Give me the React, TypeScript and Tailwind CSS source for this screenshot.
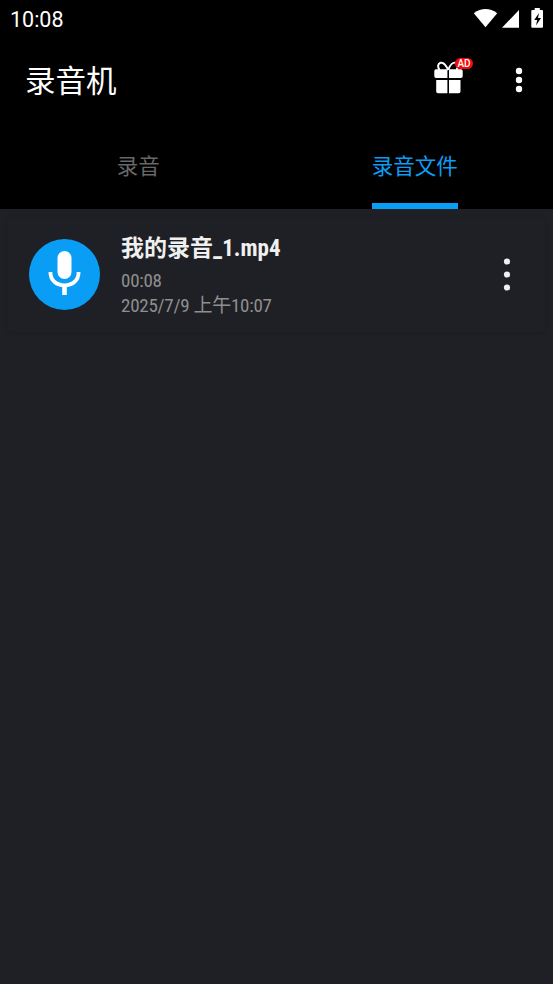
import React from 'react';

const tabs = [
  { label: '录音', active: false },
  { label: '录音文件', active: true },
];

const recordings = [
  { name: '我的录音_1.mp4', duration: '00:08', date: '2025/7/9 上午10:07' },
];

const StatusBar = () => (
  <div className="flex h-9 items-start justify-between pl-[10px] pr-[9px] text-white">
    <span className="pt-2 font-['Roboto',sans-serif] text-[21.5px] font-[450] leading-6">10:08</span>
    <svg className="mt-2" width="71" height="20" viewBox="0 0 71 20" fill="currentColor">
      <path d="M0.8 5.2 Q12.5 -3.2 24.2 5.2 L12.5 19.2Z" />
      <path d="M29 19.7 L46 2 V19.7Z" />
      <path
        fillRule="evenodd"
        d="M61.7 0H66.8V2H69Q70 2 70 3V18.7Q70 19.7 69 19.7H59.3Q58.3 19.7 58.3 18.7V3Q58.3 2 59.3 2H61.7ZM66 5L61.2 12H64.2L63 17.5L68 10H65Z"
      />
    </svg>
  </div>
);

const MoreDots = ({ className }: { className: string }) => (
  <svg className={className} width="8" height="34" viewBox="0 0 8 34" fill="currentColor">
    <circle cx="4" cy="3.5" r="3.1" />
    <circle cx="4" cy="16.5" r="3.1" />
    <circle cx="4" cy="29.5" r="3.1" />
  </svg>
);

const GiftIcon = () => (
  <svg width="29" height="33" viewBox="0 0 29 33" fill="none">
    <path
      d="M14.2 9C12 4 9 1 6.5 1.8C3.5 2.8 3.5 6 5.5 9M14.2 9C16 4 19 1 21.5 1.8C24.5 2.8 24.5 6 22.5 9"
      stroke="white"
      strokeWidth="2"
    />
    <path
      fill="white"
      d="M2 8.2H13.4V17H2Q0.3 17 0.3 15.2V10Q0.3 8.2 2 8.2ZM15 8.2H26.9Q28.7 8.2 28.7 10V15.2Q28.7 17 26.9 17H15ZM2.2 19H13.4V32.2H4Q2.2 32.2 2.2 30.4ZM15 19H26.5V30.4Q26.5 32.2 24.5 32.2H15Z"
    />
  </svg>
);

const Header = () => (
  <header className="flex h-[88px] items-center justify-between pl-[25px] pr-[30px] text-white">
    <h1 className="pt-1 text-[30.5px] font-normal leading-9">录音机</h1>
    <div className="flex items-center gap-[52px]">
      <div className="relative -mt-[5px]">
        <GiftIcon />
        <span className="absolute left-[21px] top-[-3px] flex h-[11px] w-[18px] items-center justify-center rounded-full bg-[#f90808] pt-px font-['Roboto',sans-serif] text-[10px] font-medium leading-none">
          AD
        </span>
      </div>
      <svg width="8" height="28" viewBox="0 0 8 28" fill="currentColor">
        <circle cx="4" cy="5" r="3.2" />
        <circle cx="4" cy="14" r="3.2" />
        <circle cx="4" cy="23" r="3.2" />
      </svg>
    </div>
  </header>
);

const Tabs = () => (
  <nav className="grid h-[85px] grid-cols-2">
    {tabs.map((tab) => (
      <div key={tab.label} className="flex justify-center">
        <div
          className={`flex items-center border-b-[6px] pt-2 text-[21.5px] ${
            tab.active ? 'border-[#0a9df5] text-[#0a9df5]' : 'border-transparent text-[#676767]'
          }`}
        >
          {tab.label}
        </div>
      </div>
    ))}
  </nav>
);

const App = () => {
  return (
    <div className="flex h-screen flex-col overflow-hidden bg-[#1f2025] font-['Roboto','Noto_Sans_CJK_SC',sans-serif]">
      <div className="bg-black">
        <StatusBar />
        <Header />
        <Tabs />
      </div>

      <main className="flex-1 p-2">
        {recordings.map((rec) => (
          <div
            key={rec.name}
            className="flex h-[115px] items-center rounded bg-[#1f2025] pl-[21px] pr-[34px] shadow-[0_1px_4px_rgba(0,0,0,0.15)]"
          >
            <div className="flex size-[71px] shrink-0 items-center justify-center rounded-full bg-[#0a9df5]">
              <svg className="-mt-[3px]" width="34" height="46" viewBox="0 0 34 46" fill="none">
                <rect x="9.5" y="1" width="14" height="28" rx="7" fill="white" />
                <path d="M2.4 22C2.4 31 9 35.3 16.5 35.3S30.6 31 30.6 22" stroke="white" strokeWidth="3.8" />
                <path d="M16.5 35V45" stroke="white" strokeWidth="4.6" />
              </svg>
            </div>
            <div className="ml-[21px] flex-1 pt-[2px] font-['Roboto_Condensed','Roboto','Noto_Sans_CJK_SC',sans-serif] font-stretch-condensed">
              <p className="text-[23px] font-bold leading-[30px] text-[#f0f0f0]">{rec.name}</p>
              <p className="pt-1 text-[19px] leading-[25px] tracking-[-0.25px] text-[#8f8f8f]">{rec.duration}</p>
              <p className="text-[19px] leading-[25px] tracking-[-0.25px] text-[#8f8f8f]">{rec.date}</p>
            </div>
            <MoreDots className="text-[#f0f0f0]" />
          </div>
        ))}
      </main>
    </div>
  );
};

export default App;
